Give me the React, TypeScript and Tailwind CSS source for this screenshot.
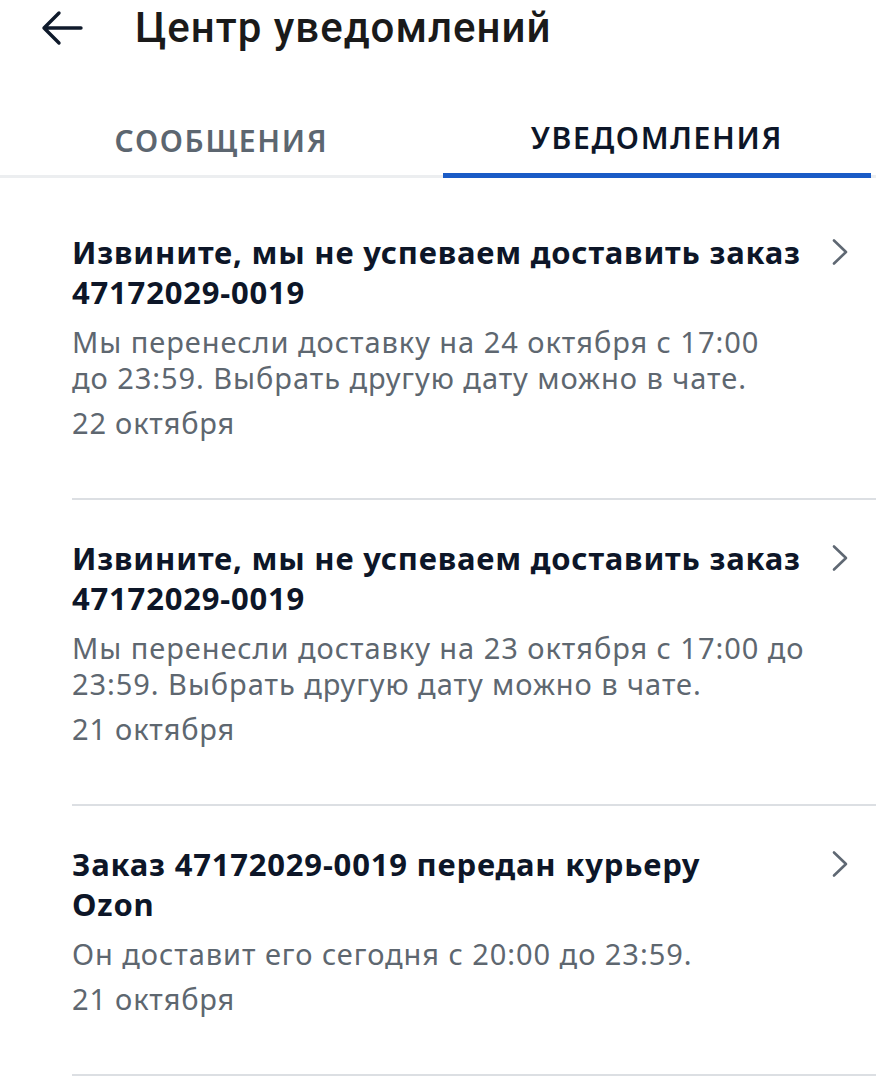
interface Notice {
  id: string;
  title: string[];
  body: string[];
  date: string;
}

const NOTICES: Notice[] = [
  {
    id: "1",
    title: ["Извините, мы не успеваем доставить заказ", "47172029-0019"],
    body: ["Мы перенесли доставку на 24 октября с 17:00", "до 23:59. Выбрать другую дату можно в чате."],
    date: "22 октября",
  },
  {
    id: "2",
    title: ["Извините, мы не успеваем доставить заказ", "47172029-0019"],
    body: ["Мы перенесли доставку на 23 октября с 17:00 до", "23:59. Выбрать другую дату можно в чате."],
    date: "21 октября",
  },
  {
    id: "3",
    title: ["Заказ 47172029-0019 передан курьеру", "Ozon"],
    body: ["Он доставит его сегодня с 20:00 до 23:59."],
    date: "21 октября",
  },
];

function BackArrow() {
  return (
    <svg width="44" height="36" viewBox="0 0 44 36" fill="none" className="text-[#0f1a2b]">
      <path d="M41 18H4M19 3L4 18l15 15" stroke="currentColor" strokeWidth="3.4" strokeLinecap="round" strokeLinejoin="round" />
    </svg>
  );
}

function Chevron() {
  return (
    <svg width="18" height="28" viewBox="0 0 18 28" fill="none" className="text-[#5f6873]">
      <path d="M3 2.5l12 11.5L3 25.5" stroke="currentColor" strokeWidth="2.6" strokeLinecap="round" strokeLinejoin="round" />
    </svg>
  );
}

export default function App() {
  return (
    <div className="w-[876px] min-h-[1080px] bg-white font-['Noto_Sans',sans-serif] overflow-hidden">
      {/* header */}
      <div className="flex items-center h-[56px]">
        <div className="ml-[40px] w-[44px] flex items-center">
          <BackArrow />
        </div>
        <h1 className="ml-[51px] text-[42px] leading-[56px] font-medium text-[#1a1a1a] font-['Roboto',sans-serif] tracking-[1px]">
          Центр уведомлений
        </h1>
      </div>

      {/* tabs */}
      <div className="mt-[44px] flex border-b-[3px] border-[#eceef0]">
        <button className="w-[443px] h-[78px] -mb-[3px] pt-[2px] text-[30px] font-semibold tracking-[1.7px] text-[#5c6670]">
          СООБЩЕНИЯ
        </button>
        <button className="w-[428px] h-[78px] -mb-[3px] pt-[2px] text-[30px] font-semibold tracking-[1.7px] text-[#0d1628] border-b-[5px] border-[#1a5bc6]">
          УВЕДОМЛЕНИЯ
        </button>
      </div>

      {/* list */}
      <div className="mt-[16px]">
        {NOTICES.map((n) => (
          <div key={n.id} className="ml-[72px] border-b-2 border-[#dcdfe3] pt-[38px] pb-[57px]">
            <div className="flex items-start">
              <div className="flex-1 text-[31px] leading-[40px] font-bold text-[#0d1628] tracking-[0.8px] whitespace-nowrap">
                {n.title.map((t, i) => (
                  <div key={i}>{t}</div>
                ))}
              </div>
              <div className="mt-[6px] mr-[27px]">
                <Chevron />
              </div>
            </div>
            <div className="mt-[12px] text-[29px] leading-[36px] text-[#5e6770] tracking-[0.95px] whitespace-nowrap">
              {n.body.map((t, i) => (
                <div key={i}>{t}</div>
              ))}
            </div>
            <div className="mt-[9px] text-[29px] leading-[36px] text-[#5e6770] tracking-[0.8px]">{n.date}</div>
          </div>
        ))}
      </div>
    </div>
  );
}
